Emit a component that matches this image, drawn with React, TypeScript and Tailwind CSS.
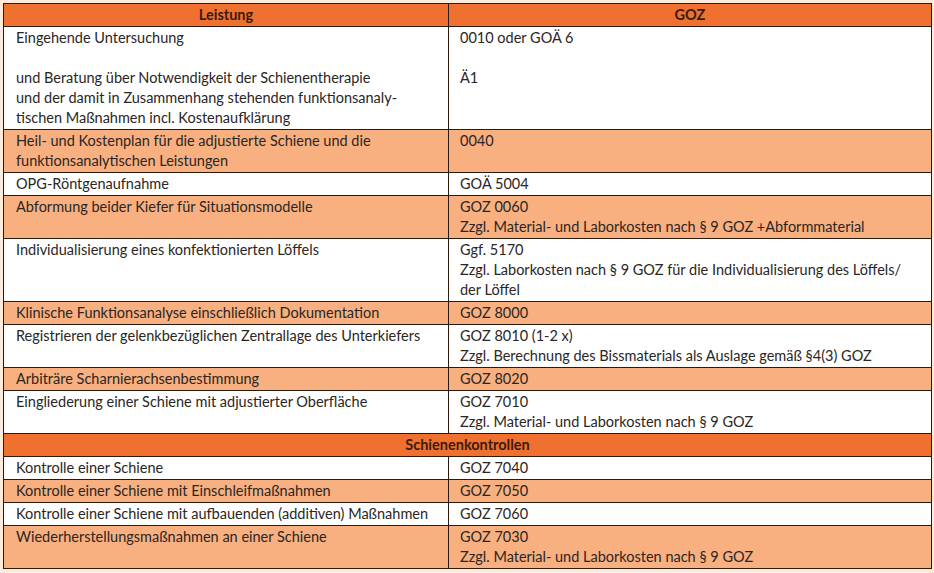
const rows: { left: string[]; right: string[]; shaded?: boolean }[] = [
  {
    left: [
      'Eingehende Untersuchung',
      '',
      'und Beratung über Notwendigkeit der Schienentherapie',
      'und der damit in Zusammenhang stehenden funktionsanaly-',
      'tischen Maßnahmen incl. Kostenaufklärung',
    ],
    right: ['0010 oder GOÄ 6', '', 'Ä1'],
  },
  {
    left: ['Heil- und Kostenplan für die adjustierte Schiene und die', 'funktionsanalytischen Leistungen'],
    right: ['0040'],
    shaded: true,
  },
  { left: ['OPG-Röntgenaufnahme'], right: ['GOÄ 5004'] },
  {
    left: ['Abformung beider Kiefer für Situationsmodelle'],
    right: ['GOZ 0060', 'Zzgl. Material- und Laborkosten nach § 9 GOZ +Abformmaterial'],
    shaded: true,
  },
  {
    left: ['Individualisierung eines konfektionierten Löffels'],
    right: ['Ggf. 5170', 'Zzgl. Laborkosten nach § 9 GOZ für die Individualisierung des Löffels/', 'der Löffel'],
  },
  { left: ['Klinische Funktionsanalyse einschließlich Dokumentation'], right: ['GOZ 8000'], shaded: true },
  {
    left: ['Registrieren der gelenkbezüglichen Zentrallage des Unterkiefers'],
    right: ['GOZ 8010 (1-2 x)', 'Zzgl. Berechnung des Bissmaterials als Auslage gemäß §4(3) GOZ'],
  },
  { left: ['Arbiträre Scharnierachsenbestimmung'], right: ['GOZ 8020'], shaded: true },
  {
    left: ['Eingliederung einer Schiene mit adjustierter Oberfläche'],
    right: ['GOZ 7010', 'Zzgl. Material- und Laborkosten nach § 9 GOZ'],
  },
];

const controls: { left: string[]; right: string[]; shaded?: boolean }[] = [
  { left: ['Kontrolle einer Schiene'], right: ['GOZ 7040'] },
  { left: ['Kontrolle einer Schiene mit Einschleifmaßnahmen'], right: ['GOZ 7050'], shaded: true },
  { left: ['Kontrolle einer Schiene mit aufbauenden (additiven) Maßnahmen'], right: ['GOZ 7060'] },
  {
    left: ['Wiederherstellungsmaßnahmen an einer Schiene'],
    right: ['GOZ 7030', 'Zzgl. Material- und Laborkosten nach § 9 GOZ'],
    shaded: true,
  },
];

function Lines({ lines }: { lines: string[] }) {
  return (
    <>
      {lines.map((l, i) => (
        <div key={i} className="whitespace-nowrap h-[20px]">
          {l}
        </div>
      ))}
    </>
  );
}

function Row({ row }: { row: { left: string[]; right: string[]; shaded?: boolean } }) {
  return (
    <tr className={row.shaded ? 'bg-[#f8b080]' : 'bg-white'}>
      <td className="border border-[#2b1a0e] align-top pl-[12px] py-[1px]">
        <Lines lines={row.left} />
      </td>
      <td className="border border-[#2b1a0e] align-top pl-[11px] py-[1px]">
        <Lines lines={row.right} />
      </td>
    </tr>
  );
}

export default function App() {
  return (
    <div
      className="w-[934px] h-[573px] bg-[#fdebdc] pt-[3px] pl-[3px]"
      style={{ fontFamily: 'Lato, "Open Sans", sans-serif' }}
    >
      <table className="w-[929px] border-collapse border border-[#2b1a0e] text-[14.5px] leading-[20px] text-[#2a2624] table-fixed">
        <colgroup>
          <col className="w-[445px]" />
          <col />
        </colgroup>
        <thead>
          <tr className="bg-[#f07030]">
            <th className="border border-[#2b1a0e] font-bold text-[#3a1c0c] text-center py-[1px]">Leistung</th>
            <th className="border border-[#2b1a0e] font-bold text-[#3a1c0c] text-center py-[1px]">GOZ</th>
          </tr>
        </thead>
        <tbody>
          {rows.map((r, i) => (
            <Row key={i} row={r} />
          ))}
          <tr className="bg-[#f07030]">
            <td colSpan={2} className="border border-[#2b1a0e] font-bold text-[#3a1c0c] text-center py-[1px]">
              Schienenkontrollen
            </td>
          </tr>
          {controls.map((r, i) => (
            <Row key={i} row={r} />
          ))}
        </tbody>
      </table>
    </div>
  );
}
